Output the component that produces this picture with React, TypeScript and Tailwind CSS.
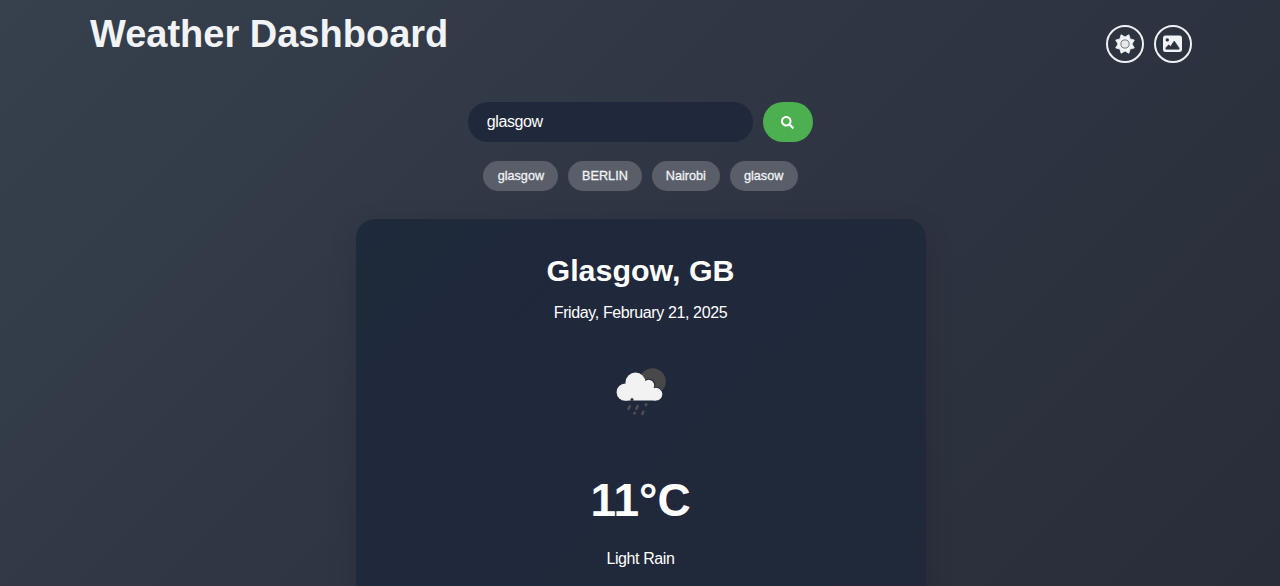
import { FaSearch } from "react-icons/fa";

const recent = ["glasgow", "BERLIN", "Nairobi", "glasow"];

function SunIcon() {
  return (
    <svg width="20" height="20" viewBox="-10 -10 20 20" aria-hidden="true">
      <path
        d="M3.9 -9.3L5.1 -5.1L9.3 -3.9L7 0L9.3 3.9L5.1 5.1L3.9 9.3L0 7L-3.9 9.3L-5.1 5.1L-9.3 3.9L-7 0L-9.3 -3.9L-5.1 -5.1L-3.9 -9.3L0 -7Z"
        fill="#f1f3f5"
        stroke="#f1f3f5"
        strokeWidth="0.8"
        strokeLinejoin="round"
      />
      <circle r="4.1" fill="#e6e8ea" stroke="#6f757f" strokeWidth="1" />
    </svg>
  );
}

function PictureIcon() {
  return (
    <svg width="20" height="18" viewBox="0 0 20 18" aria-hidden="true">
      <rect x="0" y="0.5" width="19" height="16.6" rx="2.4" fill="#f1f3f5" />
      <circle cx="4.3" cy="4.9" r="1.7" fill="#2d3441" />
      <path
        d="M2.9 14.2V12.8L5.7 9.8L7.5 11.6L11.2 6L16.1 12.9V14.2Z"
        fill="#2d3441"
        stroke="#2d3441"
        strokeWidth="0.6"
        strokeLinejoin="round"
      />
    </svg>
  );
}

function RainIcon() {
  return (
    <svg width="95" height="95" viewBox="0 0 95 95" aria-hidden="true">
      <circle cx="59.5" cy="36.5" r="13.3" fill="#484848" />
      <g stroke="#20283b" strokeWidth="1.6" fill="#20283b">
        <circle cx="56" cy="40" r="5.5" />
        <circle cx="63" cy="49" r="6.3" />
      </g>
      <g fill="#f2f2f2">
        <circle cx="32.2" cy="47.2" r="8.6" />
        <circle cx="42.5" cy="37.5" r="10" />
        <circle cx="55.7" cy="40.3" r="5.5" />
        <circle cx="62.9" cy="49.2" r="6.4" />
        <path d="M32 40L43 33L56 38L63 45V55.6H32Z" />
      </g>
      <circle cx="39" cy="54.6" r="1.5" fill="#333" />
      <g stroke="#4d4f55" strokeWidth="2.6" strokeLinecap="round">
        <path d="M36.7 61.3L35.5 64M44.6 61L43.4 63.7M53.3 59.3L52.8 60.2M41.7 67.8L41.4 68.4M50.3 66.8L49.4 69" />
      </g>
    </svg>
  );
}

export default function App() {
  return (
    <div className="h-[586px] overflow-hidden bg-[linear-gradient(135deg,#36414d_0%,#2f3542_50%,#282d39_100%)] font-['Liberation_Sans',Arial,sans-serif] text-white">
      <header className="ml-[90px] flex h-[102px] w-[1101.7px] justify-between">
        <h1 className="pt-[13px] text-[38px] leading-[43px] font-bold text-[#f1f3f7]">Weather Dashboard</h1>
        <div className="flex gap-[9.8px] pt-[24.5px]">
          <button className="flex size-[38px] items-center justify-center rounded-full border-2 border-[#eff1f4]">
            <SunIcon />
          </button>
          <button className="flex size-[38px] items-center justify-center rounded-full border-2 border-[#eff1f4]">
            <PictureIcon />
          </button>
        </div>
      </header>
      <main className="flex flex-col items-center">
        <form className="ml-px flex h-10 gap-[9.5px]">
          <input
            defaultValue="glasgow"
            className="w-[285px] rounded-full bg-[#1f293b] px-[18.5px] text-[16px] tracking-[-0.4px] text-white outline-none"
          />
          <button type="button" className="flex w-[50px] items-center justify-center rounded-[20px] bg-[#4caf50] text-[13px]">
            <FaSearch />
          </button>
        </form>
        <div className="mt-[19px] ml-px flex gap-[9.5px]">
          {recent.map((city) => (
            <button
              key={city}
              className="h-[29.5px] rounded-full bg-[#595e69] px-[14.25px] pt-px text-[12.67px] text-[#f1f3f7] [-webkit-text-stroke:0.3px_#f1f3f7]"
            >
              {city}
            </button>
          ))}
        </div>
        <section className="mt-[28.5px] ml-px flex h-[420px] w-[570px] flex-col items-center rounded-[19px] bg-[linear-gradient(135deg,#1e2a3b_0%,#20283b_35%,#20283a_100%)] pt-[33px] shadow-[0_8px_30px_rgba(0,0,0,0.12)]">
          <h2 className="text-[30.4px] leading-[36px] font-bold">Glasgow, GB</h2>
          <p className="mt-[16px] text-[16px] leading-[18px] tracking-[-0.38px]">Friday, February 21, 2025</p>
          <div className="mt-[23px] size-[95px]">
            <RainIcon />
          </div>
          <p className="mt-[33px] text-[46px] leading-[54px] font-bold">11°C</p>
          <p className="mt-[23px] text-[16px] leading-[18px] tracking-[-0.4px]">Light Rain</p>
        </section>
      </main>
    </div>
  );
}
